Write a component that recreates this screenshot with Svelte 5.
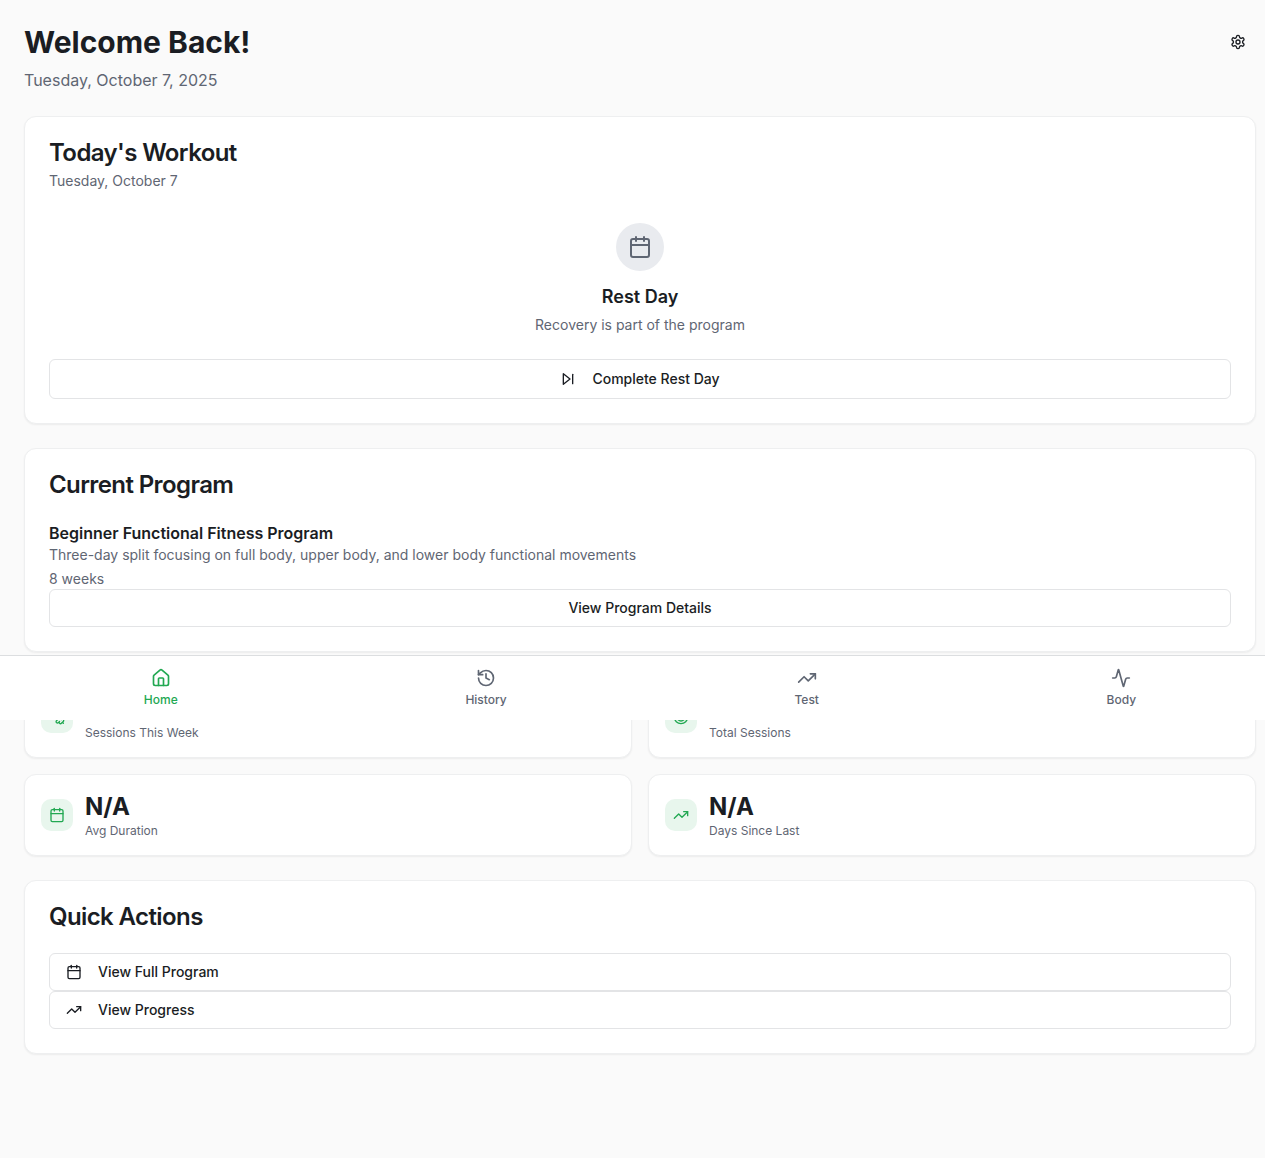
<script>
  const navItems = [
    { label: 'Home', icon: 'home', active: true },
    { label: 'History', icon: 'history', active: false },
    { label: 'Test', icon: 'trending', active: false },
    { label: 'Body', icon: 'activity', active: false },
  ];

  const stats = [
    { value: '0', label: 'Sessions This Week', icon: 'dumbbell' },
    { value: '0', label: 'Total Sessions', icon: 'target' },
    { value: 'N/A', label: 'Avg Duration', icon: 'calendar' },
    { value: 'N/A', label: 'Days Since Last', icon: 'trending' },
  ];

  const actions = [
    { label: 'View Full Program', icon: 'calendar' },
    { label: 'View Progress', icon: 'trending' },
  ];
</script>

{#snippet icon(name, size)}
  <svg
    width={size}
    height={size}
    viewBox="0 0 24 24"
    fill="none"
    stroke="currentColor"
    stroke-width="2"
    stroke-linecap="round"
    stroke-linejoin="round"
    aria-hidden="true"
  >
    {#if name === 'home'}
      <path d="M15 21v-8a1 1 0 0 0-1-1h-4a1 1 0 0 0-1 1v8" />
      <path d="M3 10a2 2 0 0 1 .709-1.528l7-5.999a2 2 0 0 1 2.582 0l7 5.999A2 2 0 0 1 21 10v9a2 2 0 0 1-2 2H5a2 2 0 0 1-2-2z" />
    {:else if name === 'history'}
      <path d="M3 12a9 9 0 1 0 9-9 9.75 9.75 0 0 0-6.74 2.74L3 8" />
      <path d="M3 3v5h5" />
      <path d="M12 7v5l4 2" />
    {:else if name === 'trending'}
      <polyline points="22 7 13.5 15.5 8.5 10.5 2 17" />
      <polyline points="16 7 22 7 22 13" />
    {:else if name === 'activity'}
      <path d="M22 12h-2.48a2 2 0 0 0-1.93 1.46l-2.35 8.36a.25.25 0 0 1-.48 0L9.24 2.18a.25.25 0 0 0-.48 0l-2.35 8.36A2 2 0 0 1 4.49 12H2" />
    {:else if name === 'calendar'}
      <path d="M8 2v4" />
      <path d="M16 2v4" />
      <rect width="18" height="18" x="3" y="4" rx="2" />
      <path d="M3 10h18" />
    {:else if name === 'target'}
      <circle cx="12" cy="12" r="10" />
      <circle cx="12" cy="12" r="6" />
      <circle cx="12" cy="12" r="2" />
    {:else if name === 'dumbbell'}
      <path d="M14.4 14.4 9.6 9.6" />
      <path d="M18.657 21.485a2 2 0 1 1-2.829-2.828l-1.767 1.768a2 2 0 1 1-2.829-2.829l6.364-6.364a2 2 0 1 1 2.829 2.829l-1.768 1.767a2 2 0 1 1 2.828 2.829z" />
      <path d="m21.5 21.5-1.4-1.4" />
      <path d="M3.9 3.9 2.5 2.5" />
      <path d="M6.404 12.768a2 2 0 1 1-2.829-2.829l1.768-1.767a2 2 0 1 1-2.828-2.829l2.828-2.828a2 2 0 1 1 2.829 2.828l1.767-1.768a2 2 0 1 1 2.829 2.829z" />
    {:else if name === 'skip'}
      <polygon points="5 4 15 12 5 20 5 4" />
      <line x1="19" x2="19" y1="5" y2="19" />
    {:else if name === 'settings'}
      <path d="M12.22 2h-.44a2 2 0 0 0-2 2v.18a2 2 0 0 1-1 1.73l-.43.25a2 2 0 0 1-2 0l-.15-.08a2 2 0 0 0-2.73.73l-.22.38a2 2 0 0 0 .73 2.73l.15.1a2 2 0 0 1 1 1.72v.51a2 2 0 0 1-1 1.74l-.15.09a2 2 0 0 0-.73 2.73l.22.38a2 2 0 0 0 2.73.73l.15-.08a2 2 0 0 1 2 0l.43.25a2 2 0 0 1 1 1.73V20a2 2 0 0 0 2 2h.44a2 2 0 0 0 2-2v-.18a2 2 0 0 1 1-1.73l.43-.25a2 2 0 0 1 2 0l.15.08a2 2 0 0 0 2.73-.73l.22-.39a2 2 0 0 0-.73-2.73l-.15-.08a2 2 0 0 1-1-1.74v-.5a2 2 0 0 1 1-1.74l.15-.09a2 2 0 0 0 .73-2.73l-.22-.38a2 2 0 0 0-2.73-.73l-.15.08a2 2 0 0 1-2 0l-.43-.25a2 2 0 0 1-1-1.73V4a2 2 0 0 0-2-2z" />
      <circle cx="12" cy="12" r="3" />
    {/if}
  </svg>
{/snippet}

<div class="shell">
  <div class="bleed">
    <main class="page">
      <header class="top">
        <div class="greeting">
          <h1>Welcome Back!</h1>
          <p>Tuesday, October 7, 2025</p>
        </div>
        <button class="settings" type="button" aria-label="Settings">
          {@render icon('settings', 16)}
        </button>
      </header>

      <section class="card">
        <div class="card-head">
          <h2>Today's Workout</h2>
          <p class="muted">Tuesday, October 7</p>
        </div>
        <div class="rest">
          <div class="rest-icon">{@render icon('calendar', 24)}</div>
          <h3>Rest Day</h3>
          <p class="muted">Recovery is part of the program</p>
        </div>
        <button class="outline tall" type="button">
          {@render icon('skip', 16)}
          Complete Rest Day
        </button>
      </section>

      <section class="card">
        <div class="card-head"><h2>Current Program</h2></div>
        <div class="program">
          <div>
            <h3>Beginner Functional Fitness Program</h3>
            <p class="muted">Three-day split focusing on full body, upper body, and lower body functional movements</p>
          </div>
          <p class="muted">8 weeks</p>
        </div>
        <button class="outline" type="button">View Program Details</button>
      </section>

      <section class="stats">
        {#each stats as stat}
          <div class="stat">
            <div class="stat-icon">{@render icon(stat.icon, 16)}</div>
            <div>
              <p class="value">{stat.value}</p>
              <p class="label">{stat.label}</p>
            </div>
          </div>
        {/each}
      </section>

      <section class="card">
        <div class="card-head"><h2>Quick Actions</h2></div>
        {#each actions as action}
          <button class="outline start" type="button">
            {@render icon(action.icon, 16)}
            {action.label}
          </button>
        {/each}
      </section>
    </main>

    <nav class="tabs" aria-label="Main">
      {#each navItems as item}
        <a href="#{item.label.toLowerCase()}" class:active={item.active} aria-current={item.active ? 'page' : undefined}>
          {@render icon(item.icon, 20)}
          <span>{item.label}</span>
        </a>
      {/each}
    </nav>
  </div>
</div>

<style>
  :global(body) {
    background: #fafafa;
  }

  .shell {
    --ink: #1a1d23;
    --muted: #5f6673;
    --line: #e3e4e6;
    --green: #22a852;
    overflow-x: clip;
    min-height: 100vh;
    color: var(--ink);
    font-family: Inter, 'Liberation Sans', sans-serif;
    font-size: 16px;
    line-height: 24px;
  }

  /* The layout runs underneath the 15px scrollbar gutter. */
  .bleed {
    position: relative;
    margin-right: -15px;
  }

  h1,
  h2,
  h3,
  p {
    margin: 0;
  }

  svg {
    display: block;
    flex-shrink: 0;
  }

  .page {
    display: flex;
    flex-direction: column;
    gap: 24px;
    padding: 24px 24px 96px;
  }

  .top {
    display: flex;
    align-items: flex-start;
    justify-content: space-between;
  }

  .greeting {
    display: flex;
    flex-direction: column;
    gap: 8px;
    color: var(--muted);
  }

  h1 {
    color: var(--ink);
    font-size: 30px;
    line-height: 36px;
    font-weight: 700;
  }

  .settings {
    display: flex;
    align-items: center;
    justify-content: center;
    width: 36px;
    height: 36px;
    padding: 0;
    border: 0;
    border-radius: 6px;
    background: transparent;
    color: var(--ink);
  }

  .card,
  .stat {
    border: 1px solid #eeeff0;
    border-radius: 12px;
    background: #fff;
    box-shadow: 0 1px 2px rgb(0 0 0 / 6%);
  }

  .card {
    padding: 24px;
  }

  .card-head {
    display: flex;
    flex-direction: column;
    gap: 6px;
    margin-bottom: 24px;
  }

  h2 {
    font-size: 24px;
    line-height: 24px;
    font-weight: 600;
    letter-spacing: -0.025em;
  }

  h3 {
    font-size: 16px;
    line-height: 24px;
    font-weight: 600;
  }

  .muted {
    color: var(--muted);
    font-size: 14px;
    line-height: 20px;
  }

  .rest {
    display: flex;
    flex-direction: column;
    align-items: center;
    gap: 4px;
    padding: 8px 0 24px;
  }

  .rest h3 {
    font-size: 18px;
    line-height: 28px;
  }

  .rest-icon {
    display: flex;
    align-items: center;
    justify-content: center;
    width: 48px;
    height: 48px;
    margin-bottom: 8px;
    border-radius: 50%;
    background: #e9ebef;
    color: var(--muted);
  }

  .program {
    display: flex;
    flex-direction: column;
    gap: 4px;
  }

  .outline {
    display: flex;
    align-items: center;
    justify-content: center;
    gap: 16px;
    width: 100%;
    height: 38px;
    padding: 0 16px;
    border: 1px solid var(--line);
    border-radius: 6px;
    background: #fff;
    color: var(--ink);
    font: 500 14px/20px Inter, 'Liberation Sans', sans-serif;
  }

  .tall {
    height: 40px;
  }

  .start {
    justify-content: flex-start;
  }

  .stats {
    display: grid;
    grid-template-columns: 1fr 1fr;
    gap: 16px;
  }

  .stat {
    display: flex;
    align-items: center;
    gap: 12px;
    padding: 16px;
  }

  .stat-icon {
    display: flex;
    align-items: center;
    justify-content: center;
    width: 32px;
    height: 32px;
    border-radius: 10px;
    background: #e8f6ed;
    color: var(--green);
  }

  .value {
    font-size: 24px;
    line-height: 32px;
    font-weight: 700;
  }

  .label {
    color: var(--muted);
    font-size: 12px;
    line-height: 16px;
  }

  .tabs {
    position: absolute;
    top: 655px;
    left: 0;
    right: 0;
    display: flex;
    align-items: center;
    justify-content: space-around;
    height: 64px;
    border-top: 1px solid #dcdee0;
    background: #fff;
  }

  .tabs a {
    display: flex;
    flex-direction: column;
    align-items: center;
    gap: 4px;
    padding: 8px 12px;
    color: var(--muted);
    font-size: 12px;
    line-height: 16px;
    font-weight: 500;
    text-decoration: none;
  }

  .tabs a.active {
    color: var(--green);
  }
</style>
